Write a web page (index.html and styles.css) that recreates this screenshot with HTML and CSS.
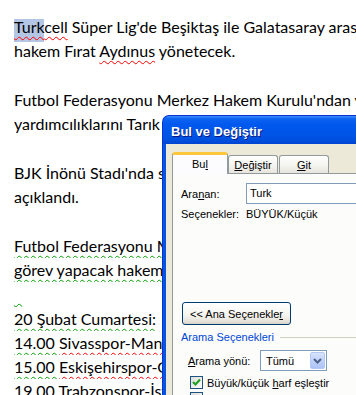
FILE: index.html
```html
<!DOCTYPE html>
<html lang="tr">
<head>
<meta charset="utf-8">
<title>Bul ve Değiştir</title>
<link rel="stylesheet" href="styles.css">
</head>
<body>
<div class="doc">
  <p class="line"><span class="sel"><span class="sp-red">Turk</span></span><span class="sp-red">cell</span> Süper Lig'de Beşiktaş ile Galatasaray arasında oynanacak</p>
  <p class="line">hakem Fırat <span class="sp-red">Aydınus</span> yönetecek.</p>
  <p class="line">&nbsp;</p>
  <p class="line">Futbol Federasyonu Merkez Hakem Kurulu'ndan yapılan açıklamaya göre</p>
  <p class="line under">yardımcılıklarını Tarık Ongun ve Bahattin Duran yapacak.</p>
  <p class="line">&nbsp;</p>
  <p class="line under">BJK İnönü Stadı'nda saat 19.00'da başlayacak maçın dördüncü hakemi de</p>
  <p class="line under">açıklandı.</p>
  <p class="line">&nbsp;</p>
  <p class="line under"><span class="sp-green">Futbol Federasyonu Merkez Hakem Kurulu'nun açıklamasına göre</span></p>
  <p class="line under"><span class="sp-green">görev yapacak hakemler şöyle:</span></p>
  <p class="line under"><span class="sp-green">&nbsp;&nbsp;</span></p>
  <p class="line under"><span class="sp-green">20 Şubat Cumartesi:</span></p>
  <p class="line under"><span class="sp-green">14.00 </span><span class="sp-red">Sivasspor-Manisaspor</span></p>
  <p class="line under"><span class="sp-green">15.00 </span><span class="sp-red">Eskişehirspor-Gaziantepspor</span></p>
  <p class="line under">19.00 Trabzonspor-İstanbul BB</p>
</div>

<div class="dialog">
  <div class="titlebar">Bul ve Değiştir</div>
  <div class="frame">
    <div class="body">
      <div class="tabs">
        <div class="tab active">Bu<u>l</u></div>
        <div class="tab"><u>D</u>eğiştir</div>
        <div class="tab"><u>G</u>it</div>
      </div>
      <div class="page">
        <div class="row find-row">
          <span class="label">Ara<u>n</u>an:</span>
          <div class="input">Turk</div>
        </div>
        <div class="row opts-row">
          <span class="label">Seçenekler:</span>
          <span class="value">BÜYÜK/Küçük</span>
        </div>
        <div class="btn">&lt;&lt; Ana Seçenekle<u>r</u></div>
        <div class="group-head">
          <span class="group-title">Arama Seçenekleri</span>
          <span class="group-line"></span>
        </div>
        <div class="row dir-row">
          <span class="label dir-label"><u>A</u>rama yönü:</span>
          <div class="combo">
            <span class="combo-text">Tümü</span>
            <span class="combo-btn">
              <svg width="9" height="6" viewBox="0 0 9 6"><polyline points="1,1 4.5,4.5 8,1" fill="none" stroke="#4d6185" stroke-width="2"/></svg>
            </span>
          </div>
        </div>
        <div class="row check-row">
          <span class="check on">
            <svg width="11" height="11" viewBox="0 0 11 11"><polyline points="2,5 4.5,7.5 9,2.5" fill="none" stroke="#21a121" stroke-width="2.2"/></svg>
          </span>
          <span class="check-label">Büyük/küçük <u>h</u>arf eşleştir</span>
        </div>
        <div class="row check-row2">
          <span class="check"></span>
          <span class="check-label">Yalnızca tam sözcükleri bul</span>
        </div>
      </div>
    </div>
  </div>
</div>
</body>
</html>
```

FILE: styles.css
```css
html, body {
  margin: 0;
  padding: 0;
  background: #ffffff;
  overflow: hidden;
  width: 356px;
  height: 395px;
}

.doc {
  padding: 15px 0 0 14px;
  font-family: Lato, "Liberation Sans", sans-serif;
  font-size: 16px;
  color: #000;
  white-space: nowrap;
}

.line {
  margin: 0;
  line-height: 24.3px;
  height: 24.3px;
}

.line.under {
  width: 148px;
  overflow: hidden;
}

.sel {
  background: linear-gradient(to bottom, transparent 2px, #b4c6e6 2px);
  padding-bottom: 6px;
}

.sp-red {
  text-decoration: underline wavy #ff0000;
  text-decoration-thickness: 1px;
  text-underline-offset: 3px;
  text-decoration-skip-ink: none;
}

.sp-green {
  text-decoration: underline wavy #00a000;
  text-decoration-thickness: 1px;
  text-underline-offset: 3px;
  text-decoration-skip-ink: none;
}

/* Dialog window */
.dialog {
  position: absolute;
  left: 162px;
  top: 115px;
  width: 260px;
  height: 320px;
  display: flex;
  flex-direction: column;
  font-family: "Liberation Sans", Arial, sans-serif;
  font-size: 11px;
  color: #000;
}

.titlebar {
  height: 29px;
  flex: none;
  box-sizing: border-box;
  padding: 8px 0 0 8px;
  border-radius: 7px 7px 0 0;
  border: 1px solid #0831d9;
  border-bottom: none;
  background: linear-gradient(to bottom, #3d8df8 0%, #0d62f1 10%, #0058ee 30%, #0055e8 60%, #0050e0 85%, #0044cf 100%);
  color: #fff;
  font-weight: bold;
  font-size: 13px;
  text-shadow: 1px 1px 0 #0a1883;
  white-space: nowrap;
}

.frame {
  flex: 1;
  background: #0855dd;
  border-left: 1px solid #0831d9;
  padding-left: 3px;
  display: flex;
}

.body {
  flex: 1;
  background: #ece9d8;
  padding: 8px 0 0 6px;
  display: flex;
  flex-direction: column;
}

.tabs {
  display: flex;
  align-items: flex-end;
  height: 21px;
  position: relative;
  z-index: 1;
}

.tab {
  box-sizing: border-box;
  height: 18px;
  width: 50px;
  border: 1px solid #919b9c;
  border-bottom: none;
  border-radius: 3px 3px 0 0;
  background: linear-gradient(to bottom, #ffffff, #f3f3ef 60%, #e6e4dc);
  display: flex;
  align-items: center;
  justify-content: center;
  margin-right: 1px;
  white-space: nowrap;
}

.tab.active {
  width: 56px;
  height: 22px;
  margin-bottom: -1px;
  margin-right: 0;
  background: #fcfcfe;
  border-top: 3px solid #ffc83c;
  padding-bottom: 1px;
}

.page {
  flex: 1;
  background: #fcfcfb;
  border: 1px solid #919b9c;
  border-right: none;
  padding: 0 0 0 8px;
  display: flex;
  flex-direction: column;
}

.row {
  display: flex;
  align-items: center;
  white-space: nowrap;
}

.find-row {
  margin-top: 9px;
  height: 21px;
}

.label {
  width: 65px;
  flex: none;
}

.input {
  box-sizing: border-box;
  height: 21px;
  flex: 1;
  border: 1px solid #7f9db9;
  background: #fff;
  padding: 3px 0 0 3px;
}

.opts-row {
  margin-top: 3px;
  height: 13px;
}

.btn {
  margin-top: 82px;
  margin-left: 1px;
  box-sizing: border-box;
  width: 109px;
  height: 23px;
  border: 1px solid #003c74;
  border-radius: 3px;
  background: linear-gradient(to bottom, #ffffff 0%, #f5f4ef 60%, #e3e0d6 90%, #d6d0c5 100%);
  display: flex;
  align-items: center;
  justify-content: center;
  white-space: nowrap;
}

.group-head {
  margin-top: 5px;
  height: 14px;
  display: flex;
  align-items: center;
  gap: 6px;
}

.group-title {
  color: #0046d5;
  white-space: nowrap;
}

.group-line {
  flex: 1;
  height: 1px;
  background: #d0d0bf;
}

.dir-row {
  margin-top: 6px;
  height: 21px;
  padding-left: 7px;
}

.dir-label {
  width: 72px;
}

.combo {
  box-sizing: border-box;
  width: 67px;
  height: 21px;
  border: 1px solid #7f9db9;
  background: #fff;
  display: flex;
  align-items: center;
  padding: 1px;
}

.combo-text {
  flex: 1;
  padding-left: 4px;
}

.combo-btn {
  box-sizing: border-box;
  width: 15px;
  height: 17px;
  border: 1px solid #b4c8f6;
  border-radius: 2px;
  background: linear-gradient(to bottom, #d8e4fd, #bccff9 60%, #adc3f6);
  display: flex;
  align-items: center;
  justify-content: center;
}

.check-row {
  margin-top: 5px;
  height: 13px;
  padding-left: 9px;
}

.check-row2 {
  margin-top: 3px;
  height: 13px;
  padding-left: 9px;
}

.check {
  box-sizing: border-box;
  width: 13px;
  height: 13px;
  flex: none;
  border: 1px solid #1c5180;
  background: linear-gradient(135deg, #dcdcd7, #ffffff);
  display: flex;
  align-items: center;
  justify-content: center;
}

.check-label {
  margin-left: 4px;
}
```
